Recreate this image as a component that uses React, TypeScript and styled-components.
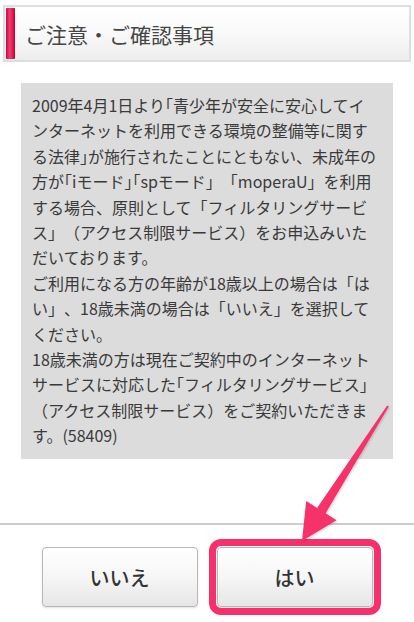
import React from 'react';
import styled, { createGlobalStyle } from 'styled-components';

const GlobalStyle = createGlobalStyle`
    html, body {
        margin: 0;
        padding: 0;
        background: #fff;
    }
    * {
        box-sizing: border-box;
    }
`;

const FONT = `'Noto Sans CJK JP', 'Noto Sans', sans-serif`;

const Page = styled.div`
    position: relative;
    width: 414px;
    height: 622px;
    overflow: hidden;
    font-family: ${FONT};
    color: #3a3a3a;
    padding-top: 5px;
    text-spacing-trim: space-all;
    text-autospace: no-autospace;
`;

const TitleBar = styled.header`
    display: flex;
    align-items: center;
    height: 57px;
    margin: 0 3px;
    padding: 1px 0 1px 1px;
    border: 2px solid #dedede;
    background: linear-gradient(to bottom, #ffffff 0%, #fafafa 45%, #ededed 100%);
`;

const Accent = styled.span`
    align-self: stretch;
    width: 9px;
    background: linear-gradient(to right, #c9063c 0%, #ef3d72 40%, #e2205a 70%, #b9002f 100%);
    border-radius: 1px;
`;

const Title = styled.h1`
    margin: 0 0 0 10px;
    font-size: 21px;
    font-weight: 400;
    color: #454545;
`;

const Notice = styled.div`
    margin: 21px 21px 0;
    height: 376px;
    padding: 10px 0 0 11px;
    background: #dcdcdc;
`;

const NoticeText = styled.p`
    margin: 0;
    font-size: 16px;
    line-height: 25.4px;
    color: #3a3a3a;
    white-space: nowrap;
    text-spacing-trim: space-all;
`;

const Half = styled.span`
    font-feature-settings: 'halt';
`;

const Footer = styled.footer`
    margin-top: 64px;
    border-top: 2px solid #cdcdcd;
    padding-top: 22px;
    display: flex;
    justify-content: center;
    gap: 19px;
`;

const Highlight = styled.div<{ $on?: boolean }>`
    border-radius: 4px;
    outline: ${p => (p.$on ? '7px solid #f5306a' : 'none')};
    outline-offset: 1px;
`;

const Button = styled.button`
    display: flex;
    align-items: center;
    justify-content: center;
    width: 156px;
    height: 60px;
    padding: 0;
    border: 1px solid #b8b8b8;
    border-radius: 4px;
    background: linear-gradient(to bottom, #ffffff 0%, #f6f6f6 50%, #e6e6e6 100%);
    box-shadow: 0 1px 2px rgba(0, 0, 0, 0.12);
    font-family: ${FONT};
    font-size: 20px;
    font-weight: 500;
    color: #333;
`;

const ArrowLayer = styled.svg`
    position: absolute;
    left: 0;
    top: 0;
    width: 414px;
    height: 622px;
    pointer-events: none;
`;

const lines: React.ReactNode[] = [
    <>2009年4月1日より<Half>「</Half>青少年が安全に安心してイ</>,
    <>ンターネットを利用できる環境の整備等に関す</>,
    <>る法律<Half>」</Half>が施行されたことにともない、未成年の</>,
    <>方が<Half>「</Half>iモード<Half>」「</Half>spモード」「moperaU」を利用</>,
    <>する場合、原則として「フィルタリングサービ</>,
    <>ス」（アクセス制限サービス）をお申込みいた</>,
    <>だいております。</>,
    <>ご利用になる方の年齢が18歳以上の場合は「は</>,
    <>い」、18歳未満の場合は「いいえ」を選択して</>,
    <>ください。</>,
    <>18歳未満の方は現在ご契約中のインターネット</>,
    <>サービスに対応した<Half>「</Half>フィルタリングサービス<Half>」</Half></>,
    <>（アクセス制限サービス）をご契約いただきま</>,
    <>す。(58409)</>,
];

// arrow from upper right down to the "はい" button
const tip = { x: 302, y: 541 };
const start = { x: 388, y: 406 };

const arrowPoints = () => {
    const dx = tip.x - start.x;
    const dy = tip.y - start.y;
    const len = Math.hypot(dx, dy);
    const ux = dx / len;
    const uy = dy / len;
    const px = -uy;
    const py = ux;
    const headLen = 36;
    const headHalf = 18;
    const bx = tip.x - ux * headLen;
    const by = tip.y - uy * headLen;
    const pts = [
        [start.x + px * 1, start.y + py * 1],
        [bx + px * 5, by + py * 5],
        [bx + px * headHalf, by + py * headHalf],
        [tip.x, tip.y],
        [bx - px * headHalf, by - py * headHalf],
        [bx - px * 5, by - py * 5],
        [start.x - px * 1, start.y - py * 1],
    ];
    return pts.map(([x, y]) => `${x.toFixed(1)},${y.toFixed(1)}`).join(' ');
};

const App = () => {
    return (
        <Page>
            <GlobalStyle />
            <TitleBar>
                <Accent />
                <Title>ご注意・ご確認事項</Title>
            </TitleBar>

            <Notice>
                <NoticeText>
                    {lines.map((line, i) => (
                        <React.Fragment key={i}>
                            {line}
                            {i < lines.length - 1 && <br />}
                        </React.Fragment>
                    ))}
                </NoticeText>
            </Notice>

            <Footer>
                <Highlight>
                    <Button>いいえ</Button>
                </Highlight>
                <Highlight $on>
                    <Button>はい</Button>
                </Highlight>
            </Footer>

            <ArrowLayer viewBox='0 0 414 622'>
                <defs>
                    <filter id='arrowShadow' x='-20%' y='-20%' width='140%' height='140%'>
                        <feDropShadow dx='1' dy='1' stdDeviation='1.2' floodColor='#000' floodOpacity='0.18' />
                    </filter>
                </defs>
                <polygon points={arrowPoints()} fill='#f5306a' strokeLinejoin='round' filter='url(#arrowShadow)' />
            </ArrowLayer>
        </Page>
    );
};

export default App;
